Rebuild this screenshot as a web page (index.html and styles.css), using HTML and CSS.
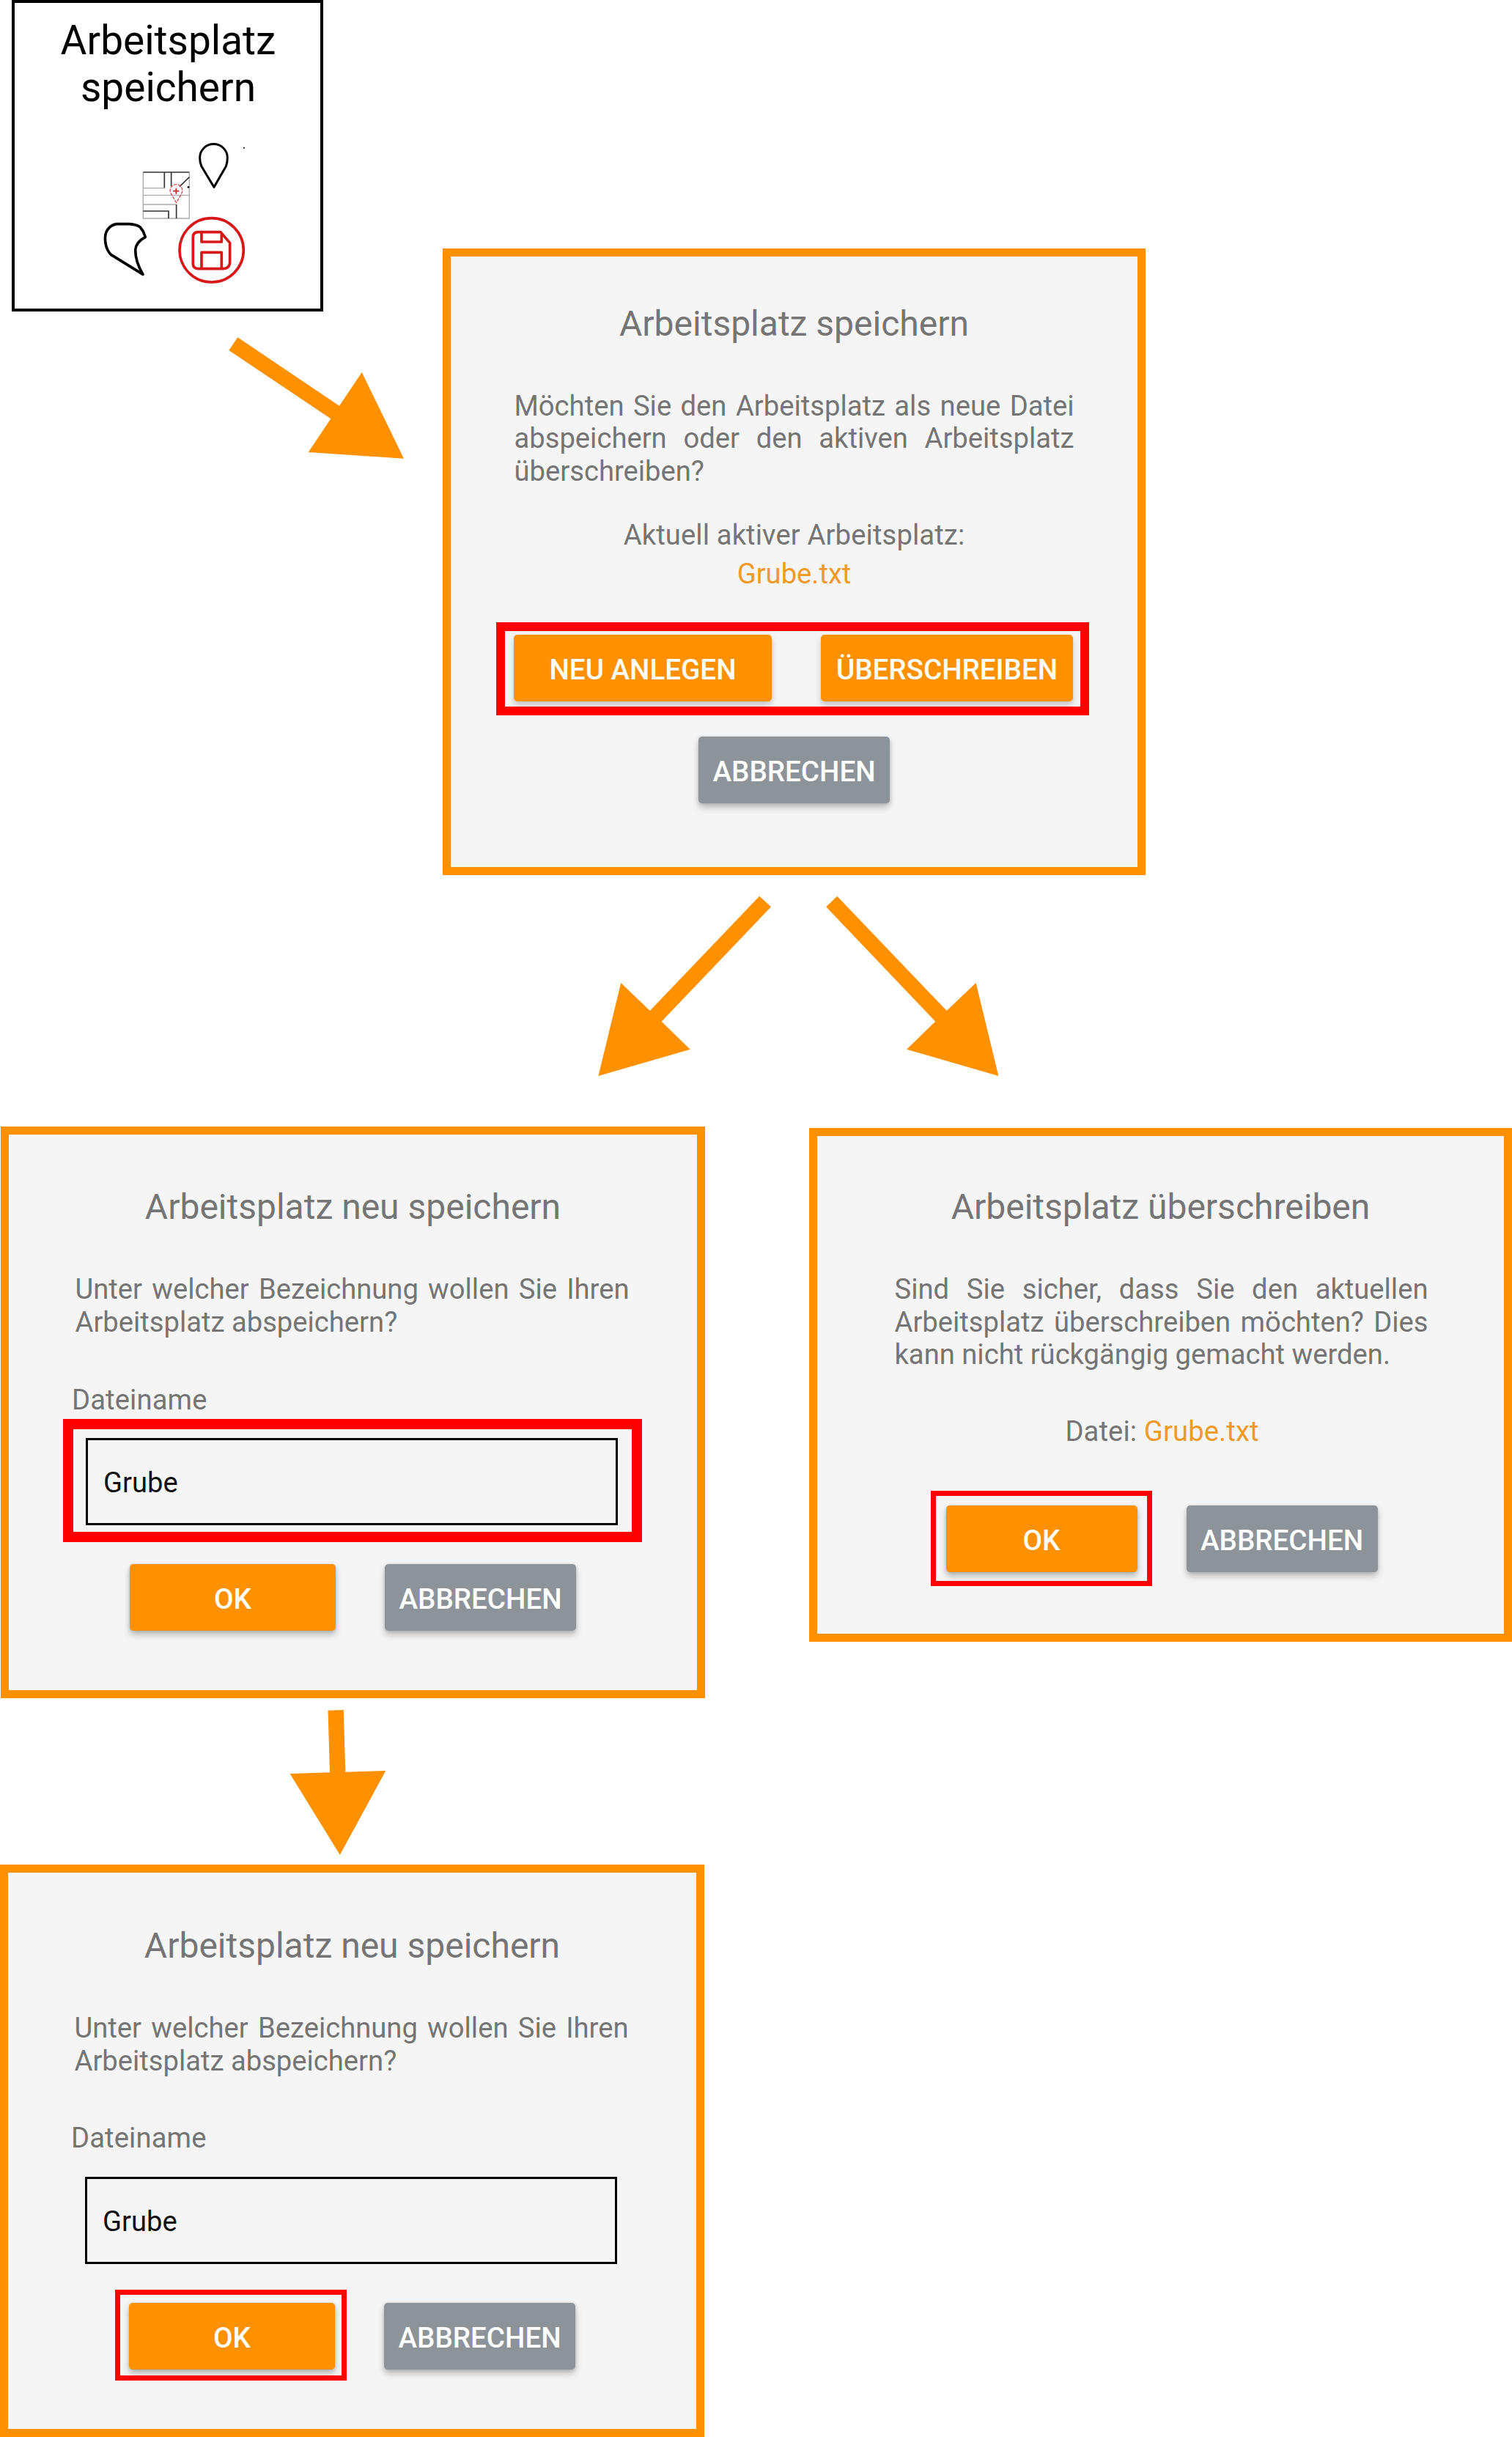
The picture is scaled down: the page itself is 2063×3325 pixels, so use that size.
FILE: index.html
```html
<!DOCTYPE html>
<html lang="de">
<head>
<meta charset="utf-8">
<title>Arbeitsplatz speichern</title>
<link rel="stylesheet" href="styles.css">
</head>
<body>
<main class="canvas">
  <svg class="arrows" viewBox="0 0 2063 3325" aria-hidden="true">
    <polygon points="324.3,460.3 463,553.7 493.7,508 551,625.7 420.7,617 451.3,571.3 312.3,478"/>
    <polygon points="1036.2,1222.7 1052,1237.3 902.6,1393.7 941.7,1431.7 816.4,1468 847.2,1341 886.8,1379"/>
    <polygon points="1142.2,1222.7 1291.7,1379 1331.6,1341 1362.4,1468 1237.1,1431.7 1276.2,1393.7 1127.2,1237.3"/>
    <polygon points="447.5,2333.7 468.8,2333 471.3,2417.7 526.3,2416 463.8,2530.7 395.6,2420 450,2418.3"/>
  </svg>

  <section class="tile node-start">
    <h1 class="tile-title">Arbeitsplatz speichern</h1>
    <svg class="tile-icon" viewBox="400 560 640 620" aria-hidden="true">
      <path class="ink" d="M877 765L826 680Q819 666 819 645A56.5 56.5 0 0 1 932 645Q932 666 926 680Z"/>
      <circle cx="1000" cy="604" r="3"/>
      <g class="map">
        <path class="soft" d="M587 703V893H776V703M587 769H676M587 798H776M587 836H722"/>
        <path class="line" d="M587 704H776M674 704V768M702 704V762M776 724L736 763M723 836V893M587 863H691V893"/>
        <circle cx="772" cy="765" r="4"/>
        <path class="marker" d="M723 829L702 793A25 25 0 1 1 743 793Z"/>
        <path class="plus" d="M709 781H734M722 769V793"/>
      </g>
      <path class="ink thick" d="M478 916H530Q560 918 574 928L587 946L596 969Q557 990 555 1022Q555 1070 586 1122L455 1041C428 1014 426 962 440 941Q453 920 478 916Z"/>
      <circle class="save" cx="867" cy="1023" r="131"/>
      <path class="save" d="M809 949H904L942 993V1074Q940 1098 914 1099H812Q792 1097 791 1080V968Q792 951 809 949ZM826 951V989H908V953M826 1097V1032H908V1097"/>
    </svg>
  </section>

  <section class="dialog node-save">
    <h2 class="title">Arbeitsplatz speichern</h2>
    <p class="text">Möchten Sie den Arbeitsplatz als neue Datei abspeichern oder den aktiven Arbeitsplatz überschreiben?</p>
    <p class="current">Aktuell aktiver Arbeitsplatz:</p>
    <p class="file">Grube.txt</p>
    <div class="choices">
      <button class="btn btn-new">NEU ANLEGEN</button>
      <button class="btn btn-over">ÜBERSCHREIBEN</button>
    </div>
    <button class="btn cancel">ABBRECHEN</button>
  </section>

  <section class="dialog node-new">
    <h2 class="title">Arbeitsplatz neu speichern</h2>
    <p class="text">Unter welcher Bezeichnung wollen Sie Ihren Arbeitsplatz abspeichern?</p>
    <p class="label">Dateiname</p>
    <div class="field marked"><div class="input">Grube</div></div>
    <div class="actions">
      <button class="btn ok">OK</button>
      <button class="btn cancel">ABBRECHEN</button>
    </div>
  </section>

  <section class="dialog node-overwrite">
    <h2 class="title">Arbeitsplatz überschreiben</h2>
    <p class="text">Sind Sie sicher, dass Sie den aktuellen Arbeitsplatz überschreiben möchten? Dies kann nicht rückgängig gemacht werden.</p>
    <p class="current">Datei: <span class="accent">Grube.txt</span></p>
    <div class="actions">
      <button class="btn ok highlight">OK</button>
      <button class="btn cancel">ABBRECHEN</button>
    </div>
  </section>

  <section class="dialog node-new node-confirm">
    <h2 class="title">Arbeitsplatz neu speichern</h2>
    <p class="text">Unter welcher Bezeichnung wollen Sie Ihren Arbeitsplatz abspeichern?</p>
    <p class="label">Dateiname</p>
    <div class="field"><div class="input">Grube</div></div>
    <div class="actions">
      <button class="btn ok highlight">OK</button>
      <button class="btn cancel">ABBRECHEN</button>
    </div>
  </section>
</main>
</body>
</html>
```
FILE: styles.css
```css
* { box-sizing: border-box; margin: 0; }

body {
  background: #fff;
  font-family: Roboto, "Liberation Sans", sans-serif;
}

/* Free canvas: the tile and the dialogs are diagram nodes joined by arrows */
.canvas {
  position: relative;
  width: 2063px;
  height: 3325px;
  overflow: hidden;
}

.arrows {
  position: absolute;
  inset: 0;
  width: 2063px;
  height: 3325px;
  fill: #ff9100;
}

.tile, .dialog { position: absolute; }

/* Start tile */
.tile {
  width: 425px;
  height: 425px;
  border: 4px solid #000;
  padding-top: 19px;
}
.node-start { left: 16px; top: 0; }

.tile-title {
  width: 342px;
  margin: 0 auto;
  padding-left: 2px;
  font-size: 55px;
  font-weight: 400;
  line-height: 64px;
  text-align: center;
  color: #000;
}

.tile-icon {
  display: block;
  width: 213.3px;
  height: 206.7px;
  margin: 35.7px 0 0 113.3px;
  fill: #000;
}
.tile-icon path, .tile-icon .save { fill: none; }
.ink { stroke: #000; stroke-width: 9; stroke-linejoin: round; }
.thick { stroke-width: 11; }
.soft { stroke: #aaa; stroke-width: 4; }
.line { stroke: #333; stroke-width: 5; }
.marker { stroke: #d05050; stroke-width: 4; stroke-dasharray: 13 4; }
.plus { stroke: #c62828; stroke-width: 5; }
.save { stroke: #d81818; stroke-width: 11; stroke-linejoin: round; }

/* Dialogs */
.dialog {
  display: flex;
  flex-direction: column;
  align-items: center;
  border: 11px solid #ff9100;
  background: #f5f5f5;
  color: #757575;
  font-size: 38.2px;
  line-height: 44.67px;
}
.node-save { left: 604px; top: 339px; width: 959px; height: 855px; padding-top: 63.5px; }
.node-new { left: 1px; top: 1537px; width: 961px; height: 780px; padding-top: 71.3px; }
.node-overwrite { left: 1104px; top: 1539px; width: 959px; height: 701px; padding-top: 69px; }
.node-confirm { left: 0; top: 2544px; height: 781px; padding-top: 72px; }

.title { font-size: 48px; font-weight: 400; line-height: 56px; }
.text { margin-top: 62px; text-align: justify; }
.node-save .text { width: 764px; }
.node-new .text { width: 756px; margin-right: 2px; }
.node-overwrite .text { width: 728px; margin-left: 2px; }

.current { margin-top: 42px; letter-spacing: .12px; }
.node-overwrite .current { margin-top: 60px; padding-left: 4px; }
.file { margin-top: 9px; color: #f09a2a; }
.accent { color: #f09a2a; }

.btn {
  position: relative;
  height: 91px;
  padding: 4px 0 0;
  border: 0;
  border-radius: 5px;
  background: #ff9100;
  box-shadow: 0 6px 10px rgba(0, 0, 0, .22), 0 1px 5px rgba(0, 0, 0, .14);
  color: #fff;
  font: 500 38.6px/45px Roboto, "Liberation Sans", sans-serif;
  white-space: nowrap;
}
.btn-new { width: 352px; }
.btn-over { width: 344px; }
.ok { width: 281px; }
.node-overwrite .ok { width: 261px; }
.cancel { width: 261px; background: #8c9399; }

.choices {
  display: flex;
  justify-content: space-between;
  align-self: flex-start;
  width: 809px;
  height: 127px;
  margin: 43px 0 29px 62px;
  padding: 5px 10px 0 12px;
  border: 12px solid #f00;
}
.choices .btn { box-shadow: 0 5px 8px rgba(0, 0, 0, .2); }

.label { align-self: flex-start; margin: 61px 0 4px 86px; letter-spacing: .12px; }

.field {
  width: 790px;
  height: 168px;
  padding: 12px 19px 9px 17px;
  border: 14px solid transparent;
  align-self: flex-start;
  margin-left: 74px;
}
.marked { border-color: #f00; }

.input {
  display: flex;
  align-items: center;
  height: 119px;
  width: 726px;
  padding: 4px 0 0 21px;
  border: 3px solid #000;
  color: #111;
}

.actions { display: flex; gap: 67px; margin-top: 30px; }
.node-overwrite .actions { margin-top: 78px; padding-left: 3px; }

/* Red frame drawn around the button to press next */
.highlight::after {
  content: "";
  position: absolute;
  inset: -20px -20px -19px -21px;
  border: 7px solid #f00;
}
.node-confirm .highlight::after { inset: -18px -16px -15px -19px; }
```
